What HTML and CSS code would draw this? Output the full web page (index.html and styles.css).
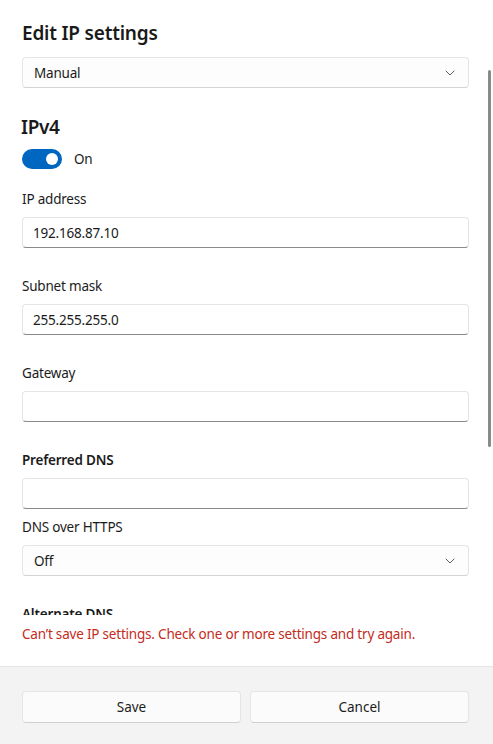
FILE: index.html
```html
<!DOCTYPE html>
<html lang="en">
<head>
<meta charset="utf-8">
<title>Edit IP settings</title>
<link rel="stylesheet" href="styles.css">
</head>
<body>
<div class="dialog">
  <div class="scroll">
    <h1 class="title">Edit IP settings</h1>
    <div class="select">
      <span>Manual</span>
      <svg class="chev" width="10" height="6" viewBox="0 0 10 6"><path d="M1 1 L5 5 L9 1" fill="none" stroke="#5f5f5f" stroke-width="1" stroke-linecap="round" stroke-linejoin="round"/></svg>
    </div>
    <h2 class="section">IPv4</h2>
    <div class="toggle-row">
      <span class="toggle"><span class="knob"></span></span>
      <span class="toggle-label">On</span>
    </div>
    <div class="field">
      <div class="label">IP address</div>
      <div class="input">192.168.87.10</div>
    </div>
    <div class="field">
      <div class="label">Subnet mask</div>
      <div class="input">255.255.255.0</div>
    </div>
    <div class="field">
      <div class="label">Gateway</div>
      <div class="input"></div>
    </div>
    <div class="field">
      <div class="label strong">Preferred DNS</div>
      <div class="input"></div>
    </div>
    <div class="field tight">
      <div class="label">DNS over HTTPS</div>
      <div class="select">
        <span>Off</span>
        <svg class="chev" width="10" height="6" viewBox="0 0 10 6"><path d="M1 1 L5 5 L9 1" fill="none" stroke="#5f5f5f" stroke-width="1" stroke-linecap="round" stroke-linejoin="round"/></svg>
      </div>
    </div>
    <div class="field">
      <div class="label strong">Alternate DNS</div>
      <div class="input"></div>
    </div>
    <div class="scrollbar"></div>
  </div>
  <div class="error">Can’t save IP settings. Check one or more settings and try again.</div>
  <div class="footer">
    <button class="btn">Save</button>
    <button class="btn">Cancel</button>
  </div>
</div>
</body>
</html>
```
FILE: styles.css
```css
* { box-sizing: border-box; }
html, body { margin: 0; padding: 0; background: #ffffff; }
body {
  font-family: "Noto Sans", "Open Sans", sans-serif;
  font-size: 13.5px;
  letter-spacing: -0.2px;
  color: #1b1b1b;
}
.dialog {
  width: 493px;
  height: 744px;
  display: flex;
  flex-direction: column;
  background: #ffffff;
}
.scroll {
  position: relative;
  height: 615px;
  overflow: hidden;
  padding: 19px 24px 0 22px;
  flex: none;
}
.title {
  margin: 0;
  font-size: 19px;
  letter-spacing: -0.2px;
  line-height: 28px;
  font-weight: 600;
  color: #1a1a1a;
}
.select {
  margin-top: 10px;
  height: 31px;
  border: 1px solid #e5e5e5;
  border-bottom-color: #d4d4d4;
  border-radius: 4px;
  background: #fdfdfd;
  display: flex;
  align-items: center;
  justify-content: space-between;
  padding: 0 13px 0 11px;
}
.field .select { margin-top: 8px; }
.chev { display: block; }
.section {
  margin: 25px 0 0 -1px;
  font-size: 19px;
  letter-spacing: -0.4px;
  line-height: 28px;
  font-weight: 600;
  color: #1a1a1a;
}
.toggle-row {
  margin-top: 8px;
  display: flex;
  align-items: center;
  gap: 12px;
}
.toggle {
  width: 40px;
  height: 20px;
  border-radius: 10px;
  background: #0067c0;
  display: flex;
  align-items: center;
  justify-content: flex-end;
  padding-right: 4px;
}
.knob {
  width: 12px;
  height: 12px;
  border-radius: 50%;
  background: #ffffff;
}
.toggle-label { line-height: 20px; }
.field { margin-top: 28px; }
.toggle-row + .field { margin-top: 20px; }
.field.tight { margin-top: 8px; }
.label { line-height: 20px; }
.label.strong { font-weight: 600; }
.input {
  margin-top: 8px;
  height: 31px;
  border: 1px solid #e5e5e5;
  border-bottom-color: #8a8a8a;
  border-radius: 4px;
  background: #ffffff;
  display: flex;
  align-items: center;
  padding: 0 11px 0 10px;
}
.scrollbar {
  position: absolute;
  right: 2px;
  top: 70px;
  width: 3px;
  height: 377px;
  border-radius: 2px;
  background: #8a8a8a;
}
.error {
  flex: none;
  padding: 9px 22px 0;
  height: 51px;
  line-height: 20px;
  color: #c42b1c;
}
.footer {
  flex: 1;
  background: #f3f3f3;
  border-top: 1px solid #e5e5e5;
  padding: 24px 24px 0 22px;
  display: flex;
  gap: 9px;
}
.btn {
  flex: 1;
  height: 32px;
  font: inherit;
  color: #1b1b1b;
  background: #fbfbfb;
  border: 1px solid #e5e5e5;
  border-bottom-color: #d0d0d0;
  border-radius: 4px;
}
```
